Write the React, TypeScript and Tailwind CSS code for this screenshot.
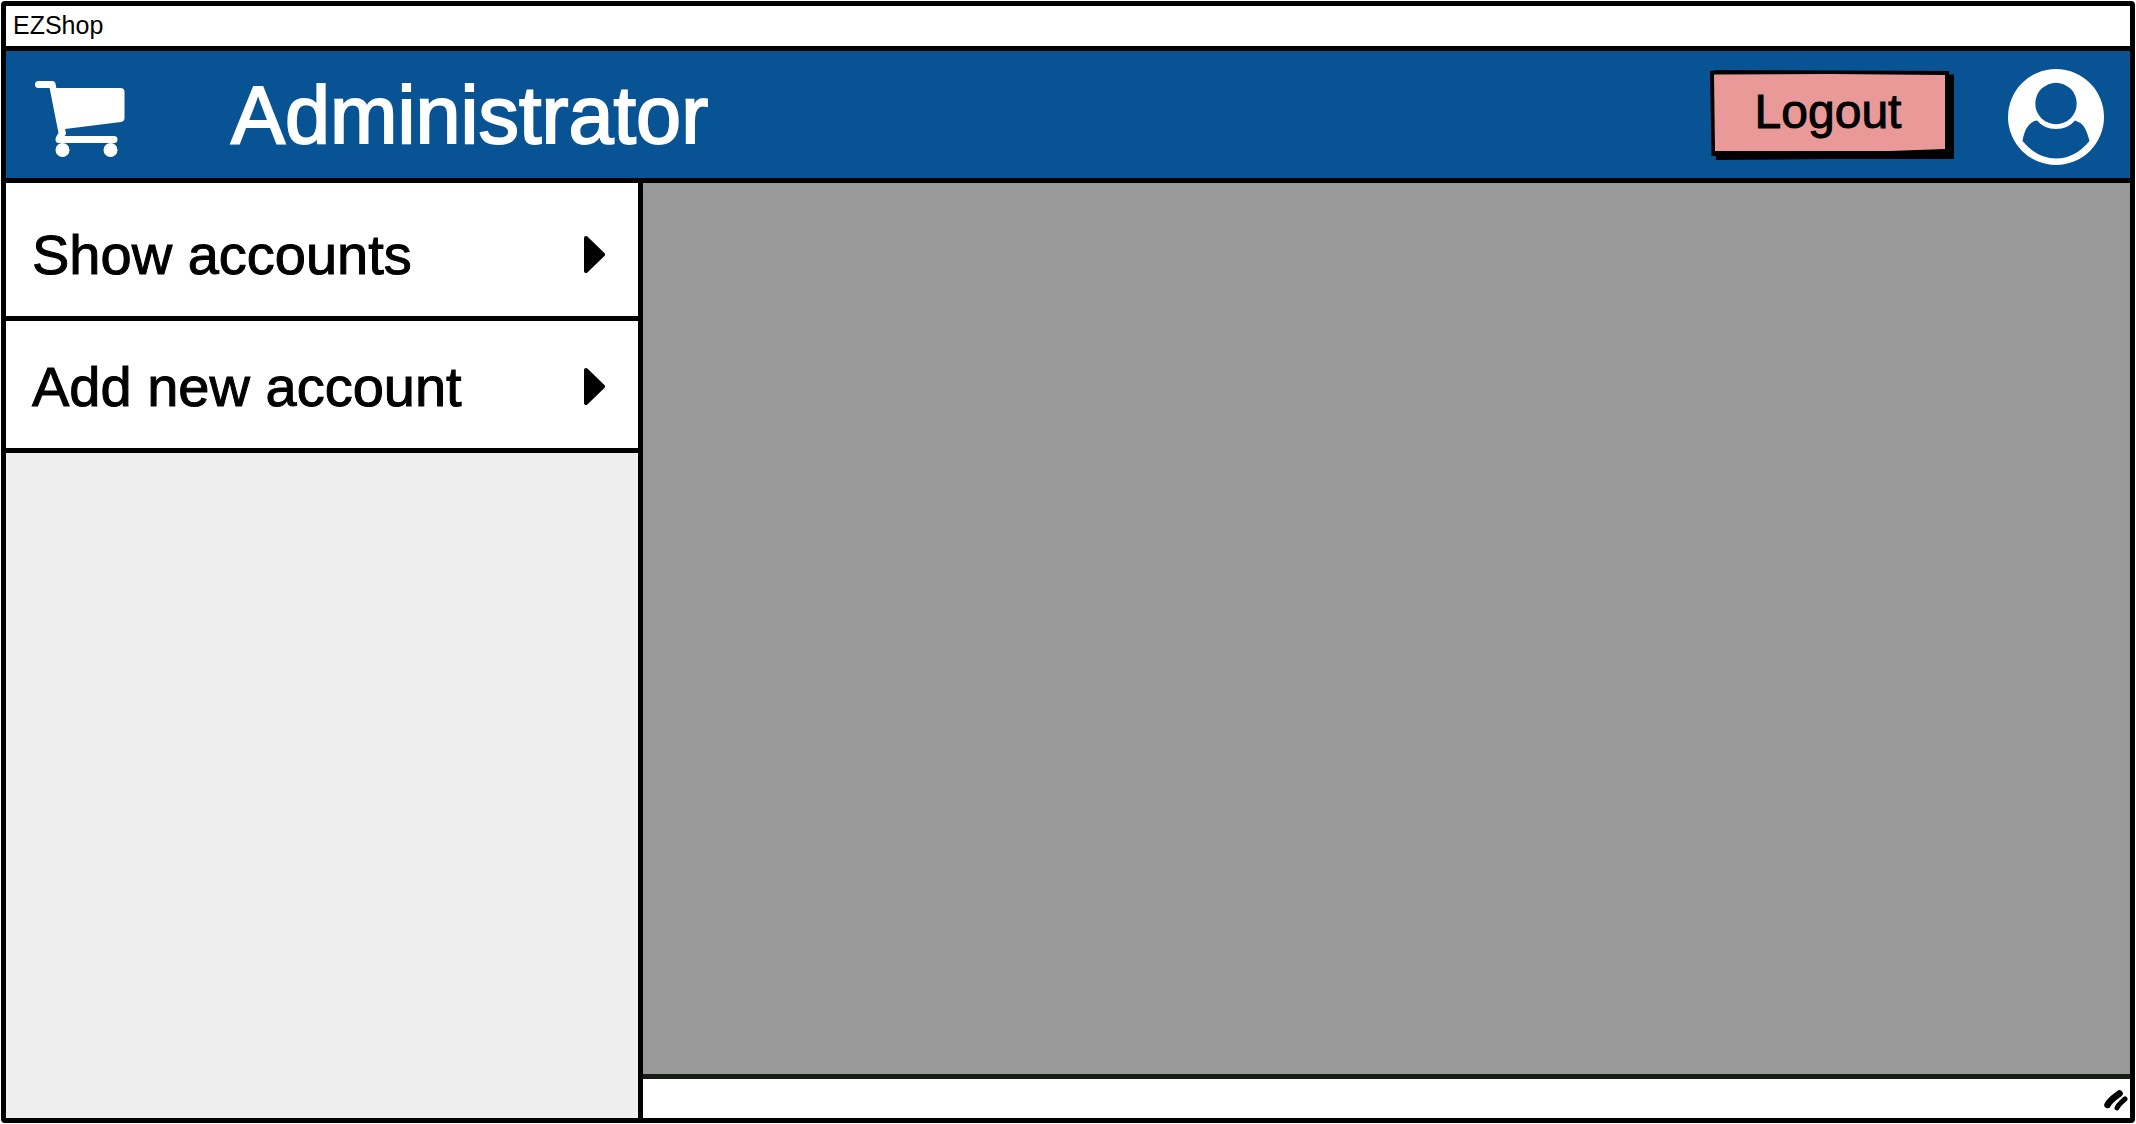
import React from "react";

const menuItems = ["Show accounts", "Add new account"];

function CartIcon() {
  return (
    <svg viewBox="0 0 90 76" className="mt-2 h-[76px] w-[90px] shrink-0" fill="currentColor" aria-hidden="true">
      <path d="M3.500 0H17Q20 0 20.600 3L21.300 7H85.500Q89.500 7 89.500 11V37Q89.500 40.600 86 41L30 48L31 52Q31 54 29.500 55H79Q82.500 55 82.500 58.500T79 62H24Q20.500 62 20.500 58.500Q20.500 56 23.500 52L14.600 7H3.500Q0 7 0 3.500T3.500 0Z" />
      <circle cx="27.500" cy="69" r="7" />
      <circle cx="75.500" cy="69" r="7" />
    </svg>
  );
}

function UserIcon() {
  return (
    <svg viewBox="0 0 96 96" className="size-24" aria-hidden="true">
      <circle cx="48" cy="48" r="48" fill="#fff" />
      <circle cx="48" cy="34.500" r="20.700" fill="#085394" />
      <path
        d="M29 51.500Q36 60 48 60T67 51.500Q72 53 75.500 57Q79 62 81.500 72Q67 89.500 48 89.500T14.500 72Q16 62 20.500 56.500Q24 52 29 51.500Z"
        fill="#085394"
      />
    </svg>
  );
}

function ArrowIcon() {
  return (
    <svg viewBox="0 0 21 37" className="h-[37px] w-[21px] shrink-0" aria-hidden="true">
      <path d="M2 2L19 18.500L2 35Z" fill="#000" stroke="#000" strokeWidth="4" strokeLinejoin="round" />
    </svg>
  );
}

function ResizeGrip() {
  return (
    <svg viewBox="0 0 24 22" className="h-[22px] w-6" stroke="#000" strokeLinecap="round" fill="none" aria-hidden="true">
      <path d="M3.500 15Q5 11 15.500 3.500" strokeWidth="6.500" />
      <path d="M13 18Q14 15 21 9" strokeWidth="5" />
    </svg>
  );
}

function LogoutButton() {
  return (
    <button type="button" className="relative h-[90px] w-[244px] text-[48px] leading-none text-black">
      <svg
        viewBox="0 0 244 90"
        preserveAspectRatio="none"
        className="absolute inset-0 size-full"
        aria-hidden="true"
      >
        <path d="M238 4.500H244V89H120L6 90V85Z" fill="#000" />
        <path d="M0 1L8 0L239 1V85L120 85L1.500 86Z" fill="#000" />
        <path d="M4 4.500L120 4L235 5V79L180 81H5Z" fill="#ea9999" />
      </svg>
      <span className="relative block pr-2 pb-1.5 [-webkit-text-stroke:1px_currentColor]">Logout</span>
    </button>
  );
}

export default function App() {
  return (
    <div className="h-screen bg-white p-px font-['Liberation_Sans',sans-serif] text-black">
      <div className="flex h-full flex-col rounded-sm border-[5px] border-black bg-black">
        <div className="flex h-10 shrink-0 items-center bg-white px-[7px] pb-0.5 text-[25px] leading-none">
          EZShop
        </div>

        <header className="flex h-[137px] shrink-0 items-center border-y-[5px] border-black bg-[#085394] pt-px pr-[26px] pl-[29px] text-white">
          <CartIcon />
          <h1 className="ml-[106px] text-[81px] leading-none [-webkit-text-stroke:2px_currentColor]">Administrator</h1>
          <div className="ml-auto flex items-center gap-[54px]">
            <LogoutButton />
            <button type="button" aria-label="User profile" className="pt-1">
              <UserIcon />
            </button>
          </div>
        </header>

        <div className="flex min-h-0 flex-1">
          <nav className="w-[30%] shrink-0 border-r-[5px] border-black bg-[#eeeeee]">
            {menuItems.map((item) => (
              <button
                key={item}
                type="button"
                className="flex h-[132px] w-full items-center justify-between border-b-[5px] border-black bg-white pt-1 pr-[33px] pl-[26px] text-left text-[56px] leading-none first:h-[138px] first:pt-2.5"
              >
                <span className="[-webkit-text-stroke:1px_currentColor]">{item}</span>
                <ArrowIcon />
              </button>
            ))}
          </nav>

          <main className="flex min-w-0 flex-1 flex-col">
            <div className="flex-1 bg-[#999999]" />
            <footer className="flex h-11 shrink-0 items-center justify-end border-t-[5px] border-[#181a18] bg-white pt-1 pr-0.5">
              <ResizeGrip />
            </footer>
          </main>
        </div>
      </div>
    </div>
  );
}
